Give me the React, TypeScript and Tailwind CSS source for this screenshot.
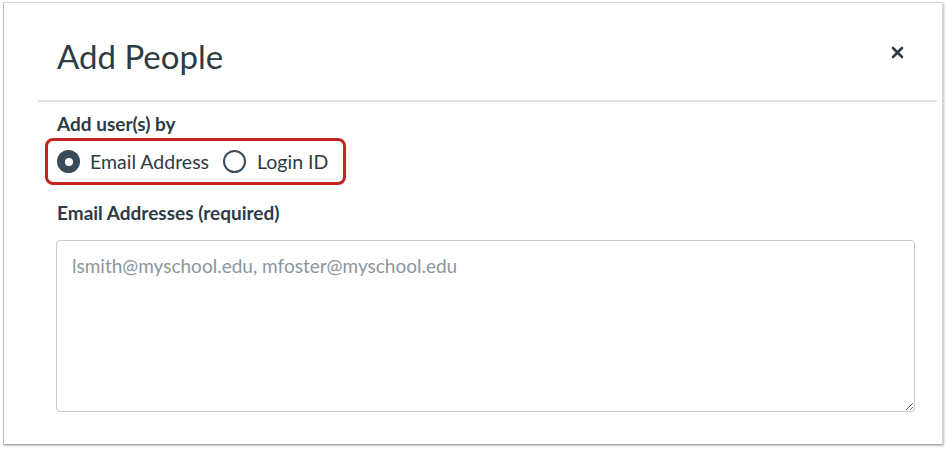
export default function App() {
  return (
    <div className="w-[947px] h-[449px] bg-white pl-[3px] pt-[2px]" style={{ fontFamily: "Lato, 'Open Sans', sans-serif" }}>
      <div className="w-[940px] h-[443px] bg-white border border-[#d6d6d6] border-l-[#bdbdbd] border-b-[#a9a9a9] shadow-[1px_1px_2px_rgba(0,0,0,0.25)] flex flex-col">
        {/* header */}
        <div className="flex items-start justify-between pl-[53px] pr-[38px] pt-[33px] h-[97px]">
          <h1 className="text-[33px] leading-[40px] text-[#2d3b45] font-normal">Add People</h1>
          <button className="mt-[10px] text-[#2d3b45]" aria-label="Close">
            <svg width="13" height="13" viewBox="0 0 13 13">
              <path d="M2 2 L11 11 M11 2 L2 11" stroke="#2d3b45" strokeWidth="2.6" strokeLinecap="round" />
            </svg>
          </button>
        </div>
        <div className="ml-[34px] mr-[5px] h-[2px] bg-[#dde1e4]" />
        {/* body */}
        <div className="pl-[53px] pr-[28px] pt-[11px] flex flex-col">
          <div className="text-[19px] leading-[22px] font-bold text-[#2d3b45]">Add user(s) by</div>
          <div className="mt-[3px] -ml-[12px] w-[301px] h-[47px] border-[3px] border-[#c4231f] rounded-[8px] flex items-center pl-[9px] gap-[14px] text-[19.5px] text-[#2d3b45]">
            <label className="flex items-center gap-[10px]">
              <span className="w-[23px] h-[23px] rounded-full bg-[#394b58] flex items-center justify-center">
                <span className="w-[8px] h-[8px] rounded-full bg-white" />
              </span>
              <span>Email Address</span>
            </label>
            <label className="flex items-center gap-[11px]">
              <span className="w-[23px] h-[23px] rounded-full border-2 border-[#394b58] bg-white" />
              <span>Login ID</span>
            </label>
          </div>
          <div className="mt-[17px] text-[19px] leading-[22px] font-bold text-[#2d3b45]">Email Addresses (required)</div>
          <textarea
            className="mt-[16px] -ml-px w-[859px] h-[172px] border border-[#c7cdd1] rounded-[4px] px-[15px] py-[11px] text-[19px] text-[#2d3b45] placeholder:text-[#8b969e] outline-none resize"
            placeholder="lsmith@myschool.edu, mfoster@myschool.edu"
          />
        </div>
      </div>
    </div>
  );
}
